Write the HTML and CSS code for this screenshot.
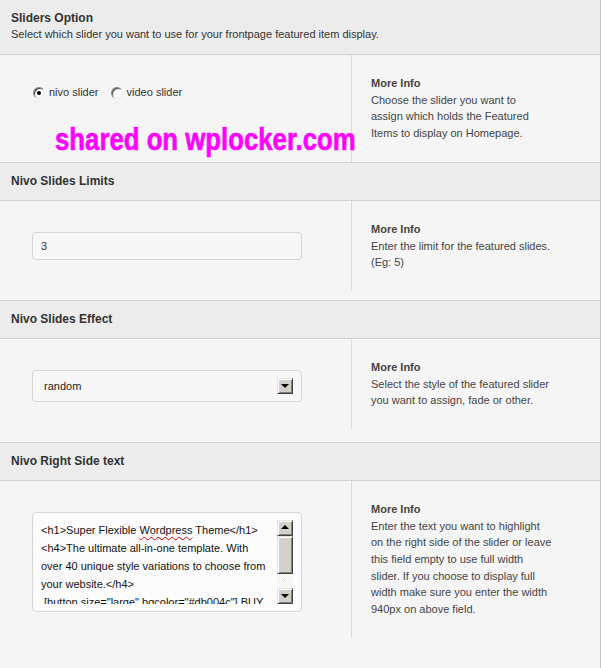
FILE: index.html
```html
<!DOCTYPE html>
<html>
<head>
<meta charset="utf-8">
<title>Slider Options</title>
<link rel="stylesheet" href="styles.css">
</head>
<body>
<div class="panel">
  <section class="opt">
    <div class="opt-head">
      <h3>Sliders Option</h3>
      <p>Select which slider you want to use for your frontpage featured item display.</p>
    </div>
    <div class="opt-body">
      <div class="opt-field radios-field">
        <div class="radios">
          <label class="radio"><span class="radio-mark checked"></span>nivo slider</label>
          <label class="radio"><span class="radio-mark"></span>video slider</label>
        </div>
      </div>
      <div class="opt-info">
        <h4>More Info</h4>
        <p>Choose the slider you want to<br>assign which holds the Featured<br>Items to display on Homepage.</p>
      </div>
      <div class="watermark">shared on wplocker.com</div>
    </div>
  </section>

  <section class="opt">
    <div class="opt-head"><h3>Nivo Slides Limits</h3></div>
    <div class="opt-body">
      <div class="opt-field">
        <div class="text-input">3</div>
      </div>
      <div class="opt-info">
        <h4>More Info</h4>
        <p>Enter the limit for the featured slides.<br>(Eg: 5)</p>
      </div>
    </div>
  </section>

  <section class="opt">
    <div class="opt-head"><h3>Nivo Slides Effect</h3></div>
    <div class="opt-body">
      <div class="opt-field">
        <div class="select"><span>random</span><span class="xp-btn down"></span></div>
      </div>
      <div class="opt-info">
        <h4>More Info</h4>
        <p>Select the style of the featured slider<br>you want to assign, fade or other.</p>
      </div>
    </div>
  </section>

  <section class="opt">
    <div class="opt-head"><h3>Nivo Right Side text</h3></div>
    <div class="opt-body">
      <div class="opt-field last-field">
        <div class="textarea">
          <div class="ta-text">&lt;h1&gt;Super Flexible <span class="spell">Wordpress</span> Theme&lt;/h1&gt;
&lt;h4&gt;The ultimate all-in-one template. With
over 40 unique style variations to choose from
your website.&lt;/h4&gt;
 [button size="large" bgcolor="#db004c"] BUY</div>
          <div class="scrollbar">
            <span class="xp-btn up"></span>
            <span class="xp-btn thumb"></span>
            <span class="sb-track"></span>
            <span class="xp-btn down"></span>
          </div>
        </div>
      </div>
      <div class="opt-info">
        <h4>More Info</h4>
        <p>Enter the text you want to highlight<br>on the right side of the slider or leave<br>this field empty to use full width<br>slider. If you choose to display full<br>width make sure you enter the width<br>940px on above field.</p>
      </div>
    </div>
  </section>
</div>
</body>
</html>
```
FILE: styles.css
```css
* { box-sizing: border-box; }

body {
  margin: 0;
  background: #ffffff;
  font-family: "Liberation Sans", Arial, sans-serif;
  font-size: 11px;
  color: #444;
}

.panel {
  width: 601px;
  background: #f5f5f5;
  border-right: 1px solid #c8c8c8;
}

.opt-head {
  background: #ececec;
  padding: 10px 11px 11px;
  border-bottom: 1px solid #d2d2d2;
}

.opt-head h3 {
  margin: 0;
  font-size: 12px;
  line-height: 16px;
  font-weight: bold;
  color: #333;
}

.opt-head p {
  margin: 0;
  line-height: 17px;
  color: #333;
}

.opt-body {
  position: relative;
  display: flex;
  align-items: flex-start;
  border-bottom: 1px solid #d2d2d2;
}

.opt-field {
  width: 351px;
  flex: none;
  padding: 31px 49px 40px 32px;
}

.radios-field { padding-top: 29px; }
.last-field { padding-bottom: 70px; }

.opt-info {
  flex: 1;
  border-left: 1px solid #dadada;
  padding: 20px 19px;
  line-height: 16.7px;
  color: #444;
}

.opt-info h4 {
  margin: 0;
  font-size: 11px;
  line-height: 16.7px;
  font-weight: bold;
  color: #444;
}

.opt-info p { margin: 0; }

/* radios */
.radios {
  display: flex;
  align-items: center;
  gap: 11px;
  line-height: 17px;
  color: #333;
}

.radio {
  display: flex;
  align-items: center;
  gap: 4px;
  padding-left: 1px;
}

.radio-mark {
  width: 12px;
  height: 12px;
  border-radius: 50%;
  border: 1px solid;
  border-color: #808080 #e8e8e8 #e8e8e8 #808080;
  background: #fff;
  box-shadow: inset 1px 1px 0 #404040;
  display: flex;
  align-items: center;
  justify-content: center;
}

.radio-mark.checked::after {
  content: "";
  width: 4px;
  height: 4px;
  border-radius: 50%;
  background: #000;
}

/* text input */
.text-input {
  height: 28px;
  border: 1px solid #d6d6d6;
  border-radius: 4px;
  background: #f7f7f7;
  padding: 0 8px;
  display: flex;
  align-items: center;
  color: #333;
}

/* select */
.select {
  height: 32px;
  border: 1px solid #d6d6d6;
  border-radius: 4px;
  background: #f7f7f7;
  padding: 0 8px 0 11px;
  display: flex;
  align-items: center;
  justify-content: space-between;
  color: #222;
}

.xp-btn {
  display: flex;
  align-items: center;
  justify-content: center;
  width: 16px;
  height: 16px;
  flex: none;
  background: #d4d0c8;
  border: 1px solid;
  border-color: #e4e2dc #404040 #404040 #e4e2dc;
  box-shadow: inset 1px 1px 0 #ffffff, inset -1px -1px 0 #808080;
}

.xp-btn.down::after {
  content: "";
  width: 0;
  height: 0;
  border-left: 4px solid transparent;
  border-right: 4px solid transparent;
  border-top: 4px solid #000;
  margin-top: 1px;
}

.xp-btn.up::after {
  content: "";
  width: 0;
  height: 0;
  border-left: 4px solid transparent;
  border-right: 4px solid transparent;
  border-bottom: 4px solid #000;
  margin-bottom: 1px;
}

.xp-btn.thumb { height: 38px; }

/* textarea */
.textarea {
  height: 100px;
  border: 1px solid #d6d6d6;
  border-radius: 4px;
  background: #fcfcfc;
  padding: 7px 8px;
  display: flex;
  gap: 6px;
}

.ta-text {
  flex: 1;
  overflow: hidden;
  white-space: pre;
  line-height: 18px;
  padding-top: 1px;
  color: #111;
}

.spell {
  text-decoration: underline wavy #e00000;
  text-decoration-thickness: 1px;
  text-underline-offset: 2px;
}

.scrollbar {
  width: 16px;
  flex: none;
  display: flex;
  flex-direction: column;
}

.sb-track {
  flex: 1;
  background: repeating-conic-gradient(#eeede6 0 25%, #ffffff 0 50%) 0 0 / 2px 2px;
}

/* watermark overlay */
.watermark {
  position: absolute;
  left: 55px;
  top: 68px;
  font-size: 32px;
  line-height: 32px;
  font-weight: bold;
  color: #ff00ff;
  -webkit-text-stroke: 0.6px #ff00ff;
  white-space: nowrap;
  transform: scaleX(0.805);
  transform-origin: 0 0;
}
```
